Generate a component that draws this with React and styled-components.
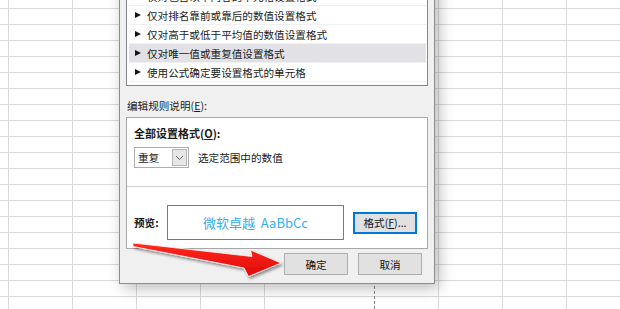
import React from 'react'
import styled, { createGlobalStyle } from 'styled-components'

const GlobalStyle = createGlobalStyle`
    html, body {
        margin: 0;
        padding: 0;
        background: #fff;
    }
    * {
        box-sizing: border-box;
    }
`;

const rules = [
    '仅对包含以下内容的单元格设置格式',
    '仅对排名靠前或靠后的数值设置格式',
    '仅对高于或低于平均值的数值设置格式',
    '仅对唯一值或重复值设置格式',
    '使用公式确定要设置格式的单元格',
]

const columns = [
    { w: 9 }, { w: 64 }, { w: 64 }, { w: 64 }, { w: 64 },
    { w: 110, dashed: true }, { w: 64 }, { w: 64 }, { w: 64 }, { w: 64 },
]

function App() {
    return (
        <>
            <GlobalStyle />
            <Screen>
                <Sheet>
                    {columns.map((c, i) => (
                        <Column key={i} $w={c.w} $dashed={c.dashed} />
                    ))}
                </Sheet>

                <Dialog>
                    <RuleList>
                        {rules.map((r, i) => (
                            <RuleRow key={i} $active={i === 3}>
                                <Triangle />
                                {r}
                            </RuleRow>
                        ))}
                    </RuleList>

                    <SectionLabel>编辑规则说明(<U>E</U>):</SectionLabel>

                    <GroupBox>
                        <TopPart>
                            <BoldLabel>全部设置格式(<U>O</U>):</BoldLabel>
                            <SelectRow>
                                <Select>
                                    <SelectText>重复</SelectText>
                                    <SelectArrow>
                                        <svg width="9" height="6" viewBox="0 0 9 6">
                                            <path d="M1 1 L4.5 4.5 L8 1" fill="none" stroke="#606060" strokeWidth="1" />
                                        </svg>
                                    </SelectArrow>
                                </Select>
                                <PlainText>选定范围中的数值</PlainText>
                            </SelectRow>
                        </TopPart>
                        <PreviewPart>
                            <PreviewLabel>预览:</PreviewLabel>
                            <PreviewBox>微软卓越&nbsp; AaBbCc</PreviewBox>
                            <Button $focused $w={64}>格式(<U>F</U>)...</Button>
                        </PreviewPart>
                    </GroupBox>

                    <ButtonBar>
                        <Button $w={64}>确定</Button>
                        <Button $w={64}>取消</Button>
                    </ButtonBar>
                </Dialog>

                <Arrow viewBox="0 0 620 309" width="620" height="309">
                    <defs>
                        <linearGradient id="redFill" x1="0" y1="0" x2="0" y2="1">
                            <stop offset="0" stopColor="#ff2a1f" />
                            <stop offset="1" stopColor="#e00808" />
                        </linearGradient>
                        <filter id="arrowShadow" x="-10%" y="-50%" width="130%" height="200%">
                            <feDropShadow dx="1.5" dy="2" stdDeviation="1.6" floodColor="#000" floodOpacity="0.45" />
                        </filter>
                    </defs>
                    <polygon
                        points="133,243 252,256.5 250.5,250 281,263 248.5,276.5 244,268 133,246.5"
                        fill="url(#redFill)"
                        stroke="#fff"
                        strokeWidth="0.8"
                        strokeLinejoin="round"
                        filter="url(#arrowShadow)"
                    />
                </Arrow>
            </Screen>
        </>
    )
}

export default App

const Screen = styled.div`
    position: relative;
    width: 620px;
    height: 309px;
    overflow: hidden;
    background: #fff;
    font-family: "Noto Sans CJK SC", "Noto Sans", sans-serif;
    font-size: 10.6px;
    color: #1a1a1a;
`;

const Sheet = styled.div`
    display: flex;
    height: 100%;
    background-image: linear-gradient(to bottom, transparent 0 15px, #dadada 15px 16px);
    background-size: 100% 16px;
    background-position: 0 -7px;
`;

const Column = styled.div`
    flex: 0 0 ${p => p.$w}px;
    height: 100%;
    border-right: 1px ${p => (p.$dashed ? 'dashed #8a8a8a' : 'solid #d9d9d9')};
`;

const Dialog = styled.div`
    position: absolute;
    left: 119px;
    top: -40px;
    width: 316px;
    height: 324px;
    background: #f0f0f0;
    border: 1px solid #8c8c8c;
    box-shadow: 4px 4px 14px rgba(0, 0, 0, 0.28);
    padding: 24px 6px 0 6px;
    display: flex;
    flex-direction: column;
`;

const RuleList = styled.div`
    background: #fff;
    border: 1px solid #828790;
    padding: 1px 1px 3px 2px;
    display: flex;
    flex-direction: column;
`;

const RuleRow = styled.div`
    height: 19px;
    display: flex;
    align-items: center;
    padding-left: 6px;
    white-space: nowrap;
    overflow: hidden;
    border-bottom: 1px solid #f0f0f0;
    background: ${p => (p.$active ? '#e1e1e6' : 'transparent')};
`;

const Triangle = styled.span`
    width: 0;
    height: 0;
    border-top: 3.5px solid transparent;
    border-bottom: 3.5px solid transparent;
    border-left: 6px solid #151515;
    margin-right: 6px;
`;

const U = styled.span`
    text-decoration: underline;
`;

const SectionLabel = styled.div`
    margin-top: 13px;
    height: 14px;
    line-height: 14px;
    padding-left: 1px;
`;

const GroupBox = styled.div`
    margin-top: 4px;
    height: 132px;
    background: #fff;
    border: 1px solid #a8a8a8;
    display: flex;
    flex-direction: column;
`;

const TopPart = styled.div`
    height: 69px;
    padding: 7px 0 0 7px;
    border-bottom: 1px solid #d2d2d2;
`;

const BoldLabel = styled.div`
    font-size: 11px;
    font-weight: 700;
    line-height: 16px;
`;

const SelectRow = styled.div`
    margin-top: 6px;
    display: flex;
    align-items: center;
    gap: 9px;
`;

const Select = styled.div`
    width: 55px;
    height: 21px;
    border: 1px solid #adadad;
    background: #fff;
    display: flex;
    align-items: center;
    justify-content: space-between;
    padding: 1px;
`;

const SelectText = styled.span`
    padding-left: 2px;
`;

const SelectArrow = styled.div`
    width: 15px;
    height: 17px;
    background: #e6e6e6;
    border: 1px solid #b5b5b5;
    display: flex;
    align-items: center;
    justify-content: center;
`;

const PlainText = styled.span``;

const PreviewPart = styled.div`
    flex: 1;
    display: flex;
    align-items: center;
    padding: 10px 0 0 7px;
`;

const PreviewLabel = styled.span`
    font-weight: 700;
    width: 33px;
`;

const PreviewBox = styled.div`
    width: 177px;
    height: 35px;
    border: 1px solid #7a7a7a;
    display: flex;
    align-items: center;
    justify-content: center;
    font-size: 13px;
    color: #36aef0;
    margin-right: 9px;
`;

const Button = styled.div`
    width: ${p => p.$w}px;
    height: 22px;
    display: flex;
    align-items: center;
    justify-content: center;
    background: #e1e1e1;
    border: 1px solid ${p => (p.$focused ? '#0078d7' : '#adadad')};
    box-shadow: ${p => (p.$focused ? 'inset 0 0 0 1px #0078d7' : 'none')};
    color: #111;
    white-space: nowrap;
`;

const ButtonBar = styled.div`
    margin-top: 4px;
    display: flex;
    justify-content: flex-end;
    gap: 10px;
    padding-right: 6px;
`;

const Arrow = styled.svg`
    position: absolute;
    left: 0;
    top: 0;
    pointer-events: none;
`;
